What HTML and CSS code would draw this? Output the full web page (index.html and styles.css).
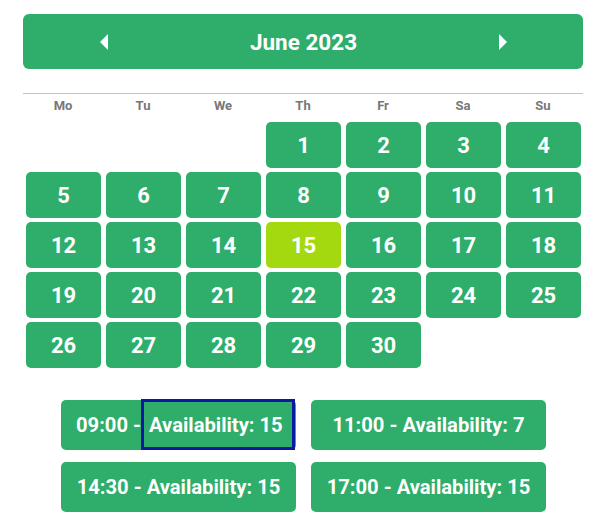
FILE: index.html
```html
<!DOCTYPE html>
<html lang="en">
<head>
  <meta charset="UTF-8">
  <meta name="viewport" content="width=device-width, initial-scale=1.0">
  <title>Booking Calendar</title>
  <link rel="stylesheet" href="styles.css">
</head>
<body>
  <div class="booking">
    <div class="month-bar">
      <button class="nav prev" aria-label="Previous month"></button>
      <span class="month-title">June 2023</span>
      <button class="nav next" aria-label="Next month"></button>
    </div>

    <div class="weekdays">
      <span>Mo</span><span>Tu</span><span>We</span><span>Th</span><span>Fr</span><span>Sa</span><span>Su</span>
    </div>

    <div class="days">
      <span class="day blank"></span>
      <span class="day blank"></span>
      <span class="day blank"></span>
      <button class="day">1</button>
      <button class="day">2</button>
      <button class="day">3</button>
      <button class="day">4</button>
      <button class="day">5</button>
      <button class="day">6</button>
      <button class="day">7</button>
      <button class="day">8</button>
      <button class="day">9</button>
      <button class="day">10</button>
      <button class="day">11</button>
      <button class="day">12</button>
      <button class="day">13</button>
      <button class="day">14</button>
      <button class="day selected">15</button>
      <button class="day">16</button>
      <button class="day">17</button>
      <button class="day">18</button>
      <button class="day">19</button>
      <button class="day">20</button>
      <button class="day">21</button>
      <button class="day">22</button>
      <button class="day">23</button>
      <button class="day">24</button>
      <button class="day">25</button>
      <button class="day">26</button>
      <button class="day">27</button>
      <button class="day">28</button>
      <button class="day">29</button>
      <button class="day">30</button>
    </div>

    <div class="slots">
      <button class="slot has-focus">09:00 -<span class="focused"> Availability: 15</span></button>
      <button class="slot">11:00 - Availability: 7</button>
      <button class="slot">14:30 - Availability: 15</button>
      <button class="slot">17:00 - Availability: 15</button>
    </div>
  </div>
</body>
</html>
```

FILE: styles.css
```css
/* Global Styles */
body {
  font-family: Roboto, "Liberation Sans", Arial, sans-serif;
  background-color: #fff;
  margin: 0;
}

.booking {
  width: 560px;
  padding: 14px 0 0 23px;
}

button {
  font-family: inherit;
  border: none;
  margin: 0;
  cursor: pointer;
}

/* Month header */
.month-bar {
  display: flex;
  align-items: center;
  justify-content: space-between;
  height: 55px;
  padding: 0 76px 0 77px;
  background-color: #2ead6b;
  border-radius: 6px;
}

.month-title {
  color: #fff;
  font-size: 22.5px;
  font-weight: bold;
}

.nav {
  width: 0;
  height: 0;
  padding: 0;
  background: none;
  border-top: 8px solid transparent;
  border-bottom: 8px solid transparent;
}

.prev {
  border-right: 8px solid #fff;
}

.next {
  border-left: 8px solid #fff;
}

/* Weekday labels */
.weekdays {
  display: grid;
  grid-template-columns: repeat(7, 80px);
  margin-top: 24px;
  border-top: 1px solid #c4c4c4;
  padding-top: 4px;
  height: 24px;
}

.weekdays span {
  text-align: center;
  color: #777;
  font-size: 13px;
  font-weight: bold;
}

/* Day grid */
.days {
  display: grid;
  grid-template-columns: repeat(7, 75px);
  grid-auto-rows: 46px;
  column-gap: 5px;
  row-gap: 4px;
  padding-left: 3px;
}

.day {
  background-color: #2ead6b;
  color: #fff;
  font-size: 22px;
  font-weight: bold;
  border-radius: 5px;
}

.day.blank {
  background: none;
}

.day.selected {
  background-color: #a4d80f;
}

/* Time slots */
.slots {
  display: grid;
  grid-template-columns: repeat(2, 235px);
  grid-auto-rows: 50px;
  column-gap: 15px;
  row-gap: 12px;
  margin: 32px 0 0 38px;
}

.slot {
  display: flex;
  align-items: center;
  justify-content: center;
  background-color: #2ead6b;
  color: #fff;
  font-size: 20.2px;
  font-weight: bold;
  border-radius: 5px;
  padding: 0;
  white-space: pre;
}

.slot.has-focus {
  justify-content: flex-start;
  padding: 0 1px 0 15px;
}

.focused {
  display: flex;
  align-items: center;
  align-self: stretch;
  flex: 1;
  margin: -1px 0 0 0;
  padding-left: 0;
  border: 3px solid #0a1aa0;
}
```
